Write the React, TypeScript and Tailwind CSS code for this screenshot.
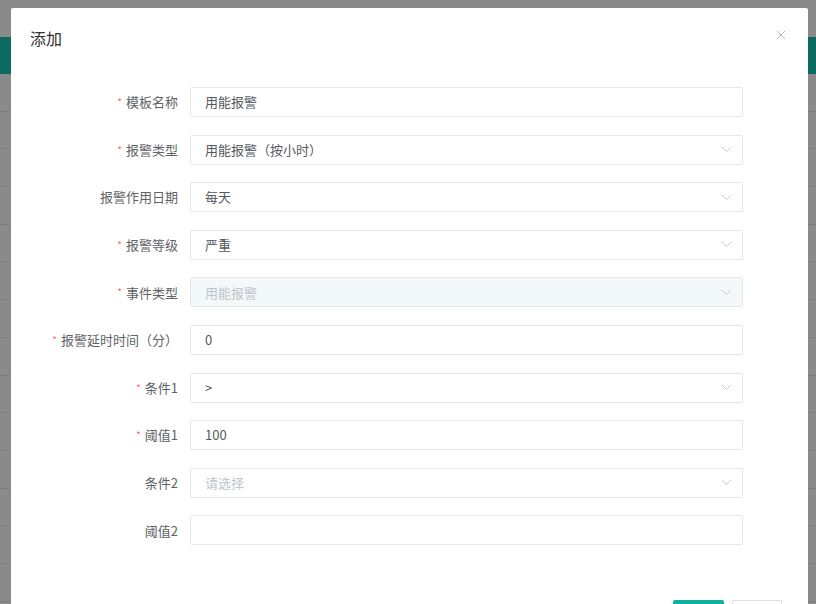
import React from 'react';

type Field = {
  label: string;
  required?: boolean;
  value?: string;
  placeholder?: string;
  select?: boolean;
  disabled?: boolean;
};

const fields: Field[] = [
  { label: '模板名称', required: true, value: '用能报警' },
  { label: '报警类型', required: true, value: '用能报警（按小时）', select: true },
  { label: '报警作用日期', value: '每天', select: true },
  { label: '报警等级', required: true, value: '严重', select: true },
  { label: '事件类型', required: true, value: '用能报警', select: true, disabled: true },
  { label: '报警延时时间（分）', required: true, value: '0' },
  { label: '条件1', required: true, value: '>', select: true },
  { label: '阈值1', required: true, value: '100' },
  { label: '条件2', placeholder: '请选择', select: true },
  { label: '阈值2' },
];

const Chevron: React.FC = () => (
  <svg width="11" height="7" viewBox="0 0 11 7" className="shrink-0">
    <polyline points="1,1 5.5,5.5 10,1" fill="none" stroke="#c8cbd0" strokeWidth="1" />
  </svg>
);

const FormRow: React.FC<{ field: Field }> = ({ field }) => {
  const text = field.value ?? field.placeholder ?? '';
  const muted = field.disabled || !field.value;
  return (
    <div className="flex items-center h-[30px]">
      <div className="w-[167px] shrink-0 flex justify-end items-center text-[13px] text-[#606266]">
        {field.required && <span className="text-[#f56c6c] text-[10px] mr-[4px] leading-none">*</span>}
        <span>{field.label}</span>
      </div>
      <div
        className={`ml-[12px] w-[553px] h-[30px] flex items-center justify-between pl-[14px] pr-[10px] border border-[#e4e6ea] rounded-[2px] text-[13px] ${
          field.disabled ? 'bg-[#f3f8f8]' : 'bg-white'
        } ${muted ? 'text-[#c0c4cc]' : 'text-[#555a60]'}`}
      >
        <span>{text}</span>
        {field.select && <Chevron />}
      </div>
    </div>
  );
};

export default function App() {
  return (
    <div
      className="relative w-[816px] h-[604px] overflow-hidden bg-[#8a8a8a]"
      style={{ fontFamily: '"Noto Sans CJK SC", "Noto Sans", sans-serif' }}
    >
      {/* page behind the overlay */}
      <div className="h-[37px]" />
      <div className="h-[37px] bg-[#0c6a61]" />
      {Array.from({ length: 14 }).map((_, i) => (
        <div key={i} className="h-[37.7px] border-b border-[#7e7e7e]" />
      ))}

      {/* dialog */}
      <div className="absolute left-[11px] top-[8px] w-[797px] h-[640px] bg-white rounded-[2px]">
        <div className="relative px-[19px] pt-[18px]">
          <div className="text-[16px] leading-[24px] text-[#303133]">添加</div>
          <button className="absolute right-[22px] top-[22px] w-[10px] h-[10px]">
            <svg width="10" height="10" viewBox="0 0 10 10">
              <path d="M1 1L9 9M9 1L1 9" stroke="#b4b7bc" strokeWidth="1" />
            </svg>
          </button>
        </div>

        <div className="flex flex-col gap-[17.6px] pt-[37px]">
          {fields.map((f) => (
            <FormRow key={f.label} field={f} />
          ))}
        </div>

        <div className="flex justify-end gap-[8px] pr-[26px] pt-[55px]">
          <button className="w-[51px] h-[30px] bg-[#13aea2] rounded-[2px]" />
          <button className="w-[50px] h-[30px] bg-white border border-[#dcdfe6] rounded-[2px]" />
        </div>
      </div>
    </div>
  );
}
